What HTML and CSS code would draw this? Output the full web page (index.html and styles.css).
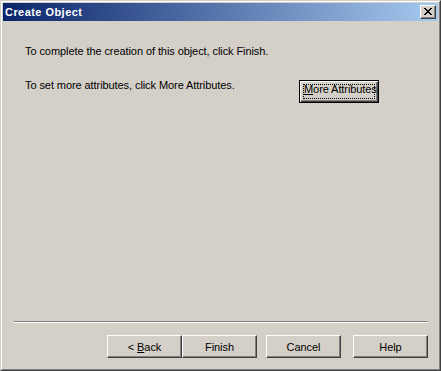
FILE: index.html
```html
<!DOCTYPE html>
<html lang="en">

<head>
  <meta charset="UTF-8">
  <title>Create Object</title>
  <link rel="stylesheet" href="styles.css">
</head>

<body>
  <div class="window">
    <div class="window-inner">
      <div class="titlebar">
        <span class="title">Create Object</span>
        <button class="close-btn" aria-label="Close">
          <svg width="8" height="7" viewBox="0 0 8 7" shape-rendering="crispEdges">
            <path fill="#000" d="M0 0h2v1H0z M6 0h2v1H6z M1 1h2v1H1z M5 1h2v1H5z M2 2h4v1H2z M3 3h2v1H3z M2 4h4v1H2z M1 5h2v1H1z M5 5h2v1H5z M0 6h2v1H0z M6 6h2v1H6z" />
          </svg>
        </button>
      </div>

      <div class="content">
        <p class="line">To complete the creation of this object, click Finish.</p>
        <div class="attr-row">
          <p class="line">To set more attributes, click More Attributes.</p>
          <button class="btn btn-default"><span class="focus"><u>M</u>ore Attributes</span></button>
        </div>
      </div>

      <div class="footer">
        <div class="separator"></div>
        <div class="buttons">
          <div class="pair">
            <button class="btn">&lt; <u>B</u>ack</button>
            <button class="btn">Finish</button>
          </div>
          <button class="btn">Cancel</button>
          <button class="btn">Help</button>
        </div>
      </div>
    </div>
  </div>
</body>

</html>
```

FILE: styles.css
```css
* {
  margin: 0;
  padding: 0;
  box-sizing: border-box;
  font-family: "Liberation Sans", Arial, sans-serif;
}

html,
body {
  width: 100%;
  height: 100%;
  background: #d4d0c8;
}

.window {
  width: 441px;
  height: 371px;
  border: 1px solid;
  border-color: #d4d0c8 #404040 #404040 #d4d0c8;
  background: #d4d0c8;
}

.window-inner {
  height: 100%;
  border: 1px solid;
  border-color: #fff #808080 #808080 #fff;
  padding: 1px;
  display: flex;
  flex-direction: column;
}

.titlebar {
  height: 18px;
  display: flex;
  align-items: center;
  justify-content: space-between;
  padding: 0 2px 0 2px;
  background: linear-gradient(to right, #0a246a, #a6caf0);
}

.title {
  color: #fff;
  font-size: 11px;
  font-weight: bold;
  line-height: 13px;
  letter-spacing: 0.45px;
}

.close-btn {
  width: 16px;
  height: 14px;
  display: flex;
  align-items: center;
  justify-content: center;
  background: #d4d0c8;
  border: 1px solid;
  border-color: #fff #404040 #404040 #fff;
  box-shadow: inset -1px -1px #808080;
  padding-bottom: 1px;
  padding-right: 1px;
}

.content {
  flex: 1;
  padding: 24px 0 0 22px;
}

.line {
  font-size: 11px;
  line-height: 13px;
  letter-spacing: -0.08px;
  color: #000;
}

.attr-row {
  margin-top: 21px;
  display: grid;
  grid-template-columns: 274px auto;
  align-items: start;
}

.btn {
  width: 75px;
  height: 23px;
  font-size: 11px;
  letter-spacing: -0.08px;
  color: #000;
  background: #d4d0c8;
  border: 1px solid;
  border-color: #fff #404040 #404040 #fff;
  box-shadow: inset -1px -1px #808080;
  white-space: nowrap;
}

.btn u {
  text-decoration-thickness: 1px;
  text-underline-offset: 1px;
}

.btn-default {
  width: 80px;
  margin-top: 1px;
  border: 1px solid #000;
  box-shadow: inset 1px 1px #fff, inset -1px -1px #404040, inset -2px -2px #808080;
  padding: 3px;
}

.focus {
  display: block;
  height: 15px;
  line-height: 9px;
  padding-bottom: 4px;
  text-align: center;
  border: 1px dotted #000;
}

.footer {
  padding: 0 10px 10px 11px;
}

.separator {
  height: 2px;
  border-top: 1px solid #808080;
  border-bottom: 1px solid #fff;
}

.buttons {
  margin-top: 12px;
  display: flex;
  justify-content: flex-end;
  gap: 12px;
}

.pair {
  display: flex;
  margin-right: -3px;
}
```
